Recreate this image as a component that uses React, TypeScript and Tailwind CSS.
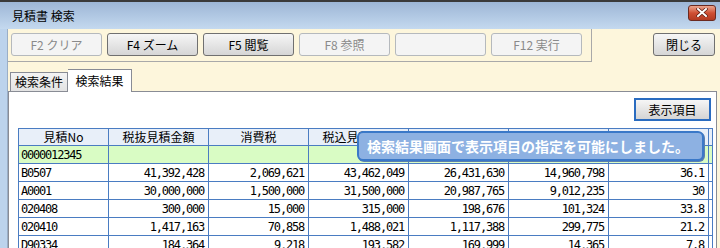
import React from "react";

const jp = { fontFamily: '"Noto Sans CJK JP", "Noto Sans", sans-serif' };
const mono = { fontFamily: '"DejaVu Sans Mono", "Noto Sans CJK JP", monospace' };

const headers = ["見積No", "税抜見積金額", "消費税", "税込見積金額", "原価金額", "粗利金額", "粗利率", ""];

const rows = [
  ["B0507", "41,392,428", "2,069,621", "43,462,049", "26,431,630", "14,960,798", "36.1", ""],
  ["A0001", "30,000,000", "1,500,000", "31,500,000", "20,987,765", "9,012,235", "30", ""],
  ["020408", "300,000", "15,000", "315,000", "198,676", "101,324", "33.8", ""],
  ["020410", "1,417,163", "70,858", "1,488,021", "1,117,388", "299,775", "21.2", ""],
  ["D90334", "184,364", "9,218", "193,582", "169,999", "14,365", "7.8", ""],
];

function ToolButton({ label, disabled }: { label: string; disabled?: boolean }) {
  return (
    <div
      className={
        "flex h-[23px] w-[91px] items-center justify-center rounded-[3px] border text-[12px] " +
        (disabled
          ? "border-[#b5b9bd] bg-[#f4f4f4] text-[#8a8a8a]"
          : "border-[#707070] bg-gradient-to-b from-[#f6f6f6] to-[#d6d6d6] text-black")
      }
      style={jp}
    >
      {label}
    </div>
  );
}

export default function App() {
  return (
    <div className="relative h-[248px] w-[720px] overflow-hidden bg-[#bcd3ec]" style={jp}>
      {/* Title bar */}
      <div className="flex h-[29px] items-center border-t-2 border-[#3a3a3a] bg-gradient-to-b from-[#9db6d6] to-[#c4d9ef] pl-[12px] pr-[4px]">
        <span className="text-[12px] text-black">見積書 検索</span>
        <div className="ml-auto mt-[-6px] flex h-[16px] w-[28px] items-center justify-center rounded-[3px] border border-[#6b2a20] bg-gradient-to-b from-[#e9a58f] via-[#cf4f33] to-[#b23a22]">
          <svg width="12" height="9" viewBox="0 0 12 9">
            <path d="M2 1 L10 8 M10 1 L2 8" stroke="#5a1a10" strokeWidth="3.4" strokeLinecap="square" />
            <path d="M2 1 L10 8 M10 1 L2 8" stroke="#ffffff" strokeWidth="2" strokeLinecap="square" />
          </svg>
        </div>
      </div>

      <div className="flex">
        {/* left frame */}
        <div className="w-[8px] shrink-0 border-r border-[#9aaec6] bg-[#bcd3ec]" />

        <div className="flex-1 bg-[#fdf6dc]">
          {/* Toolbar */}
          <div className="flex h-[37px] items-start">
            <div className="flex h-[33px] w-[584px] gap-[5px] border-b border-r border-[#a9a9a9] pl-[3px] pt-[4px]">
              <ToolButton label="F2 クリア" disabled />
              <ToolButton label="F4 ズーム" />
              <ToolButton label="F5 閲覧" />
              <ToolButton label="F8 参照" disabled />
              <ToolButton label="" disabled />
              <ToolButton label="F12 実行" disabled />
            </div>
            <div className="ml-auto mr-[5px] mt-[4px] flex h-[23px] w-[62px] items-center justify-center rounded-[3px] border border-[#707070] bg-gradient-to-b from-[#f6f6f6] to-[#d6d6d6] text-[12px]">
              閉じる
            </div>
          </div>

          {/* Tabs */}
          <div className="flex h-[25px] items-end pl-[2px]">
            <div className="flex h-[19px] w-[58px] items-center justify-center border border-b-0 border-[#898c95] bg-gradient-to-b from-[#f3f3f3] to-[#e3e3e3] text-[12px]">
              検索条件
            </div>
            <div className="relative top-[1px] z-10 flex h-[23px] w-[64px] items-center justify-center border border-b-0 border-l-0 border-[#898c95] bg-white text-[12px]">
              検索結果
            </div>
          </div>

          {/* Panel */}
          <div className="mr-[3px] h-[160px] border border-[#898c95] bg-white">
            <div className="flex justify-end pr-[5px] pt-[6px]">
              <div className="flex h-[23px] w-[77px] items-center justify-center border-2 border-[#2a6cc0] bg-gradient-to-b from-[#f6f6f6] to-[#d4d4d4] text-[12px]">
                表示項目
              </div>
            </div>

            <div className="ml-[9px] mt-[7px] w-[695px] overflow-hidden border-l border-r border-t border-[#4a7cc2]">
              <div className="w-[790px]">
                <div className="flex bg-[#e8eff9]">
                  {headers.map((h, i) => (
                    <div
                      key={i}
                      className={
                        "flex h-[17px] shrink-0 items-center justify-center border-b border-r border-[#4a7cc2] text-[12px] " +
                        (i === 0 ? "w-[90px]" : "w-[100px]")
                      }
                    >
                      {h}
                    </div>
                  ))}
                </div>
                <div className="flex bg-[#d9fcc4]">
                  {headers.map((_, i) => (
                    <div
                      key={i}
                      className={
                        "flex h-[18px] shrink-0 items-center border-b border-r border-[#4a7cc2] pl-[2px] text-[12px] tracking-[-1.2px] " +
                        (i === 0 ? "w-[90px]" : "w-[100px]")
                      }
                      style={mono}
                    >
                      {i === 0 ? "0000012345" : ""}
                    </div>
                  ))}
                </div>
                {rows.map((r, ri) => (
                  <div key={ri} className="flex">
                    {r.map((c, i) => (
                      <div
                        key={i}
                        className={
                          "flex h-[18px] shrink-0 items-center border-b border-r border-[#4a7cc2] text-[12px] tracking-[-1.2px] " +
                          (i === 0 ? "w-[90px] pl-[2px]" : "w-[100px] justify-end pr-[4px]")
                        }
                        style={mono}
                      >
                        {c}
                      </div>
                    ))}
                  </div>
                ))}
              </div>
            </div>
          </div>
        </div>
      </div>

      {/* Tooltip */}
      <div className="absolute left-[357px] top-[131px] flex h-[30px] w-[347px] items-center rounded-[6px] border-2 border-[#3a78c8] bg-[#8db1e2] pl-[8px] text-[14px] font-bold text-white shadow-[1px_1px_0_#5a7fb0]">
        検索結果画面で表示項目の指定を可能にしました。
      </div>
    </div>
  );
}
